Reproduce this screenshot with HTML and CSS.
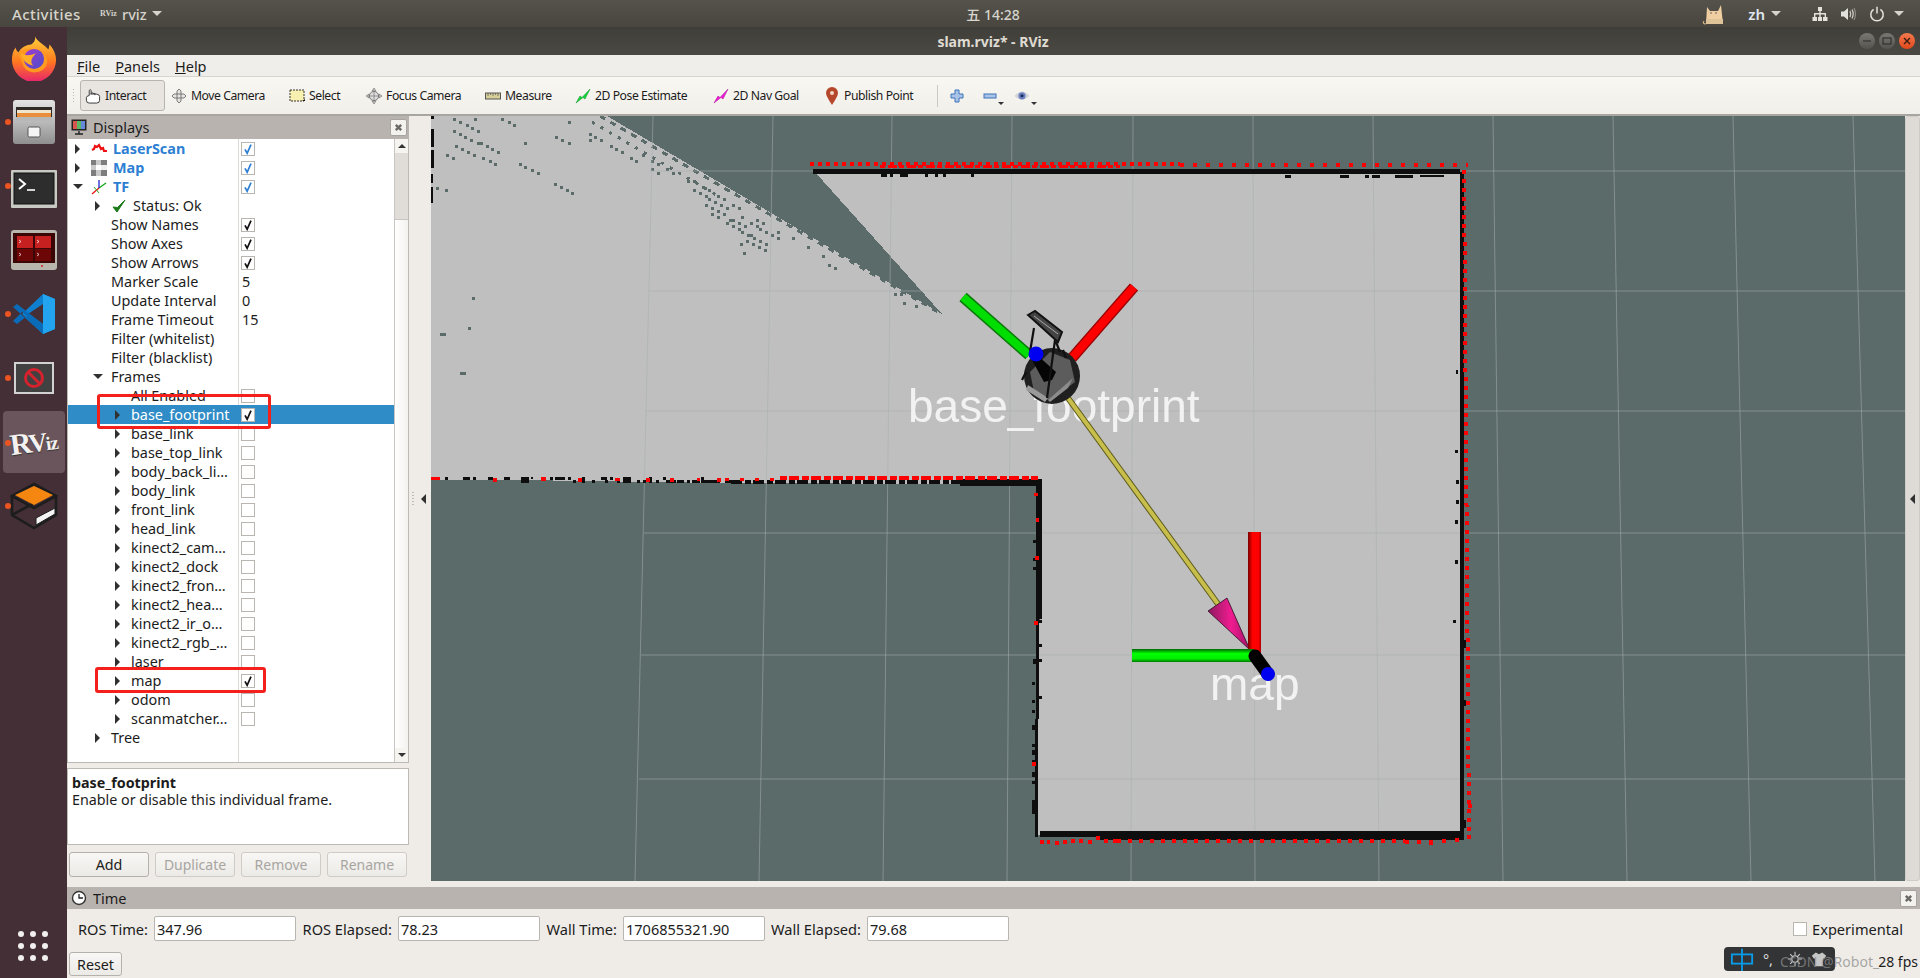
FILE: index.html
```html
<!DOCTYPE html>
<html lang="en">
<head>
<meta charset="utf-8">
<title>slam.rviz* - RViz</title>
<link rel="stylesheet" href="styles.css">
</head>
<body>
<svg class="sprite" aria-hidden="true"><defs>
<symbol id="check" viewBox="0 0 14 14"><path d="M3.500 7.500 L6 12 L10.500 2" fill="none" stroke="currentColor" stroke-width="2"/></symbol>
<symbol id="close" viewBox="0 0 10 10"><path d="M2 2 L8 8 M8 2 L2 8" fill="none" stroke="#6b6865" stroke-width="2.600"/></symbol>
<linearGradient id="metal" x1="0" y1="0" x2="0" y2="1"><stop offset="0" stop-color="#e4e4e4"/><stop offset="1" stop-color="#8f8f8f"/></linearGradient>
<linearGradient id="ffo" x1="0" y1="0" x2="0" y2="1"><stop offset="0" stop-color="#ffd23c"/><stop offset=".55" stop-color="#ff7a1e"/><stop offset="1" stop-color="#e8246c"/></linearGradient>
<linearGradient id="ffp" x1="0" y1="0" x2="1" y2="1"><stop offset="0" stop-color="#a23ad0"/><stop offset="1" stop-color="#4a4ec8"/></linearGradient>
<linearGradient id="shaftR" x1="0" y1="0" x2="1" y2="0"><stop offset="0" stop-color="#700"/><stop offset=".35" stop-color="#f00"/><stop offset=".8" stop-color="#f00"/><stop offset="1" stop-color="#a00"/></linearGradient>
<linearGradient id="shaftG" x1="0" y1="0" x2="0" y2="1"><stop offset="0" stop-color="#060"/><stop offset=".35" stop-color="#0f0"/><stop offset=".75" stop-color="#0e0"/><stop offset="1" stop-color="#070"/></linearGradient>
<linearGradient id="cone" x1="0" y1="0" x2="1" y2="0"><stop offset="0" stop-color="#8e1a60"/><stop offset=".55" stop-color="#f01c90"/><stop offset="1" stop-color="#a01468"/></linearGradient>
</defs></svg>

<div class="screen">
  <header class="topbar">
    <div class="top-left">
      <span class="activities">Activities</span>
      <span class="app-mini">RViz</span>
      <span class="app-name">rviz</span>
      <i class="caret"></i>
    </div>
    <div class="clock">五 14:28</div>
    <div class="top-right">
      <svg class="cat" viewBox="0 0 24 24"><path d="M5 5 L8 9 H16 L19 3 L21 22 H4 Z" fill="#efcfa2"/><path d="M4 22 Q0 22 2 19" fill="none" stroke="#d8b888" stroke-width="1.200"/><circle cx="9" cy="11" r=".8" fill="#555"/><circle cx="14" cy="11" r=".8" fill="#555"/><rect x="4" y="17" width="17" height="5" fill="#dfc398"/></svg>
      <span class="lang">zh</span><i class="caret"></i>
      <svg class="tray net" viewBox="0 0 16 16"><path d="M6 1 H10 V5 H8.700 V7 H14 V11 H15.500 V15 H11 V11 H12.600 V8.400 H8.700 V11 H10 V15 H6 V11 H7.300 V8.400 H3.400 V11 H5 V15 H.5 V11 H2 V7 H7.300 V5 H6 Z" fill="#e4e2dc"/></svg>
      <svg class="tray vol" viewBox="0 0 16 16"><path d="M1 5.500 H4 L8 2 V14 L4 10.500 H1 Z" fill="#e4e2dc"/><path d="M10 5 Q11.500 8 10 11 M12 3.500 Q14.400 8 12 12.500" fill="none" stroke="#cfccc6" stroke-width="1.300"/><path d="M14 2 Q17 8 14 14" fill="none" stroke="#8e8b85" stroke-width="1.200"/></svg>
      <svg class="tray pow" viewBox="0 0 16 16"><path d="M4.600 3.400 A6.200 6.200 0 1 0 11.400 3.400" fill="none" stroke="#e4e2dc" stroke-width="1.500"/><path d="M8 .8 V7.400" stroke="#e4e2dc" stroke-width="1.500"/></svg>
      <i class="caret"></i>
    </div>
  </header>

  <div class="desktop">
    <nav class="dock">
      <div class="launch">
        <svg class="ic-ff" viewBox="0 0 48 48"><path d="M25 1 C27 7 34 9 39 15 C40 13 40 11 40 10 C45 15 47 21 47 26 A23 23 0 0 1 1 26 C1 21 2 16 5 13 C5 15 6 17 8 18 C10 13 17 10 21 10 C24 8 26 5 25 1 Z" fill="url(#ffo)"/><path d="M8 20 Q14 12 24 15 Q36 15 38 27 Q37 38 24 39 Q14 38 12 30 Q10 25 8 20Z" fill="#ff9a20"/><circle cx="24" cy="25" r="10.500" fill="url(#ffp)"/><path d="M10 19 Q17 23 26 19 Q18 27 23 32 Q13 30 10 19Z" fill="#ffb028"/></svg>
      </div>
      <div class="launch run">
        <svg class="ic-files" viewBox="0 0 42 44"><rect x="0" y="0" width="42" height="44" rx="3" fill="url(#metal)"/><rect x="3" y="7" width="36" height="14" fill="#2f2a26"/><rect x="4" y="10" width="34" height="3" fill="#f0e4cc"/><rect x="4" y="13" width="34" height="4" fill="#e98e3c"/><rect x="3" y="17" width="36" height="4" fill="#b8b8b8"/><rect x="15" y="27" width="12" height="10" rx="1.500" fill="#f4f4f4" stroke="#555"/></svg>
      </div>
      <div class="launch run">
        <svg class="ic-term ic-shift" viewBox="0 0 46 38"><rect width="46" height="38" rx="1" fill="#c9c9c4"/><rect x="3" y="3" width="40" height="31" fill="#2d2d2d" stroke="#111"/><path d="M8 9 L14 14 L8 19" fill="none" stroke="#fff" stroke-width="2"/><path d="M16 20 H24" stroke="#fff" stroke-width="1.600"/></svg>
      </div>
      <div class="launch">
        <svg class="ic-term" viewBox="0 0 46 40"><rect width="46" height="40" rx="3" fill="#b9b6ad"/><rect x="2" y="3" width="42" height="30" fill="#3a0606"/><rect x="6" y="6" width="16" height="12" fill="#c62020"/><rect x="24" y="6" width="16" height="12" fill="#c62020"/><rect x="6" y="19" width="16" height="12" fill="#6d0606"/><rect x="24" y="19" width="16" height="12" fill="#6d0606"/><path d="M8 10 l2 1.500 l-2 1.500 M26 10 l2 1.500 l-2 1.500 M8 23 l2 1.500 l-2 1.500 M26 23 l2 1.500 l-2 1.500" stroke="#fff" fill="none" stroke-width=".7"/><circle cx="31" cy="36" r="1" fill="#d22"/></svg>
      </div>
      <div class="launch run">
        <svg class="ic-vs" viewBox="0 0 42 42"><path d="M30 1 L42 6 V36 L30 41 L9 21 Z" fill="#0f7fd0"/><path d="M30 1 L42 6 V36 L30 41 Z" fill="#23a4ee"/><path d="M30 11 L15 21 L30 31 Z" fill="#452f36"/><path d="M0 14 L4 11 L30 31 V41 Z M0 28 L4 31 L14 23 L9 19 Z" fill="#0a6cb8"/></svg>
      </div>
      <div class="launch run">
        <svg class="ic-no" viewBox="0 0 40 32"><rect width="40" height="32" fill="#d2d2d2"/><rect x="2" y="2" width="36" height="28" fill="#414141"/><circle cx="20" cy="16" r="8.500" fill="none" stroke="#d2232e" stroke-width="3"/><path d="M14 10 L26 22" stroke="#d2232e" stroke-width="3"/></svg>
      </div>
      <div class="launch run active">
        <span class="rviz-logo">R<span class="rviz-v">V</span><span class="rviz-iz">iz</span></span>
      </div>
      <div class="launch run">
        <svg class="ic-gz" viewBox="0 0 48 48"><path d="M24 2 L46 14 L24 26 L2 14 Z M2 14 V33 L24 46 L46 33 V14 M2 33 L24 21" fill="none" stroke="#1d1d1d" stroke-width="2.600"/><path d="M24 4 L43 13 L24 23 L5 13 Z" fill="#f5860f"/><path d="M26 36 L45 26 V32 L26 43 Z" fill="#f4f4f4" stroke="#1d1d1d"/></svg>
      </div>
      <div class="apps">
        <i></i><i></i><i></i><i></i><i></i><i></i><i></i><i></i><i></i>
      </div>
    </nav>

    <div class="window">
      <div class="titlebar">
        <span class="title">slam.rviz* - RViz</span>
        <div class="winbtns">
          <span class="wb"><svg viewBox="0 0 16 16"><path d="M4 8 H12" stroke="#333" stroke-width="1.200"/></svg></span>
          <span class="wb"><svg viewBox="0 0 16 16"><rect x="4" y="5" width="8" height="6" fill="none" stroke="#333" stroke-width="1.200"/></svg></span>
          <span class="wb wb-close"><svg viewBox="0 0 16 16"><path d="M5 5 L11 11 M11 5 L5 11" stroke="#3a1c10" stroke-width="1.400"/></svg></span>
        </div>
      </div>
      <div class="menubar"><span><u>F</u>ile</span><span><u>P</u>anels</span><span><u>H</u>elp</span></div>
      <div class="toolbar">
        <span class="grip"></span>
        <div class="tool current"><svg class="ti" viewBox="0 0 16 17"><path d="M4 8 V2.500 Q5 1 6 2.500 V7 V5.500 Q7 4.500 8 5.500 V7 V6 Q9 5 10 6 V7.500 V6.600 Q11 5.800 12 6.600 Q15 7 15 9 V13 Q15 16 12 16 H4 Q1 16 1 13 V10 Q1 8.500 4 8 Z" fill="#fff" stroke="#333" stroke-width="1"/></svg>Interact</div>
        <div class="tool"><svg class="ti" viewBox="0 0 16 16"><path d="M8 1 L10 3 V6 H13 L15 8 L13 10 H10 V13 L8 15 L6 13 V10 H3 L1 8 L3 6 H6 V3 Z M6 6 H10 V10 H6 Z" fill="#e8e6e2" stroke="#6d6d6d" stroke-width=".9"/></svg>Move Camera</div>
        <div class="tool"><svg class="ti" viewBox="0 0 16 16"><rect x="1" y="2" width="14" height="11" fill="#f8f0b0" stroke="#333" stroke-dasharray="2 1"/><path d="M13 13 H16 V11 Z" fill="#111"/></svg>Select</div>
        <div class="tool"><svg class="ti" viewBox="0 0 16 16"><circle cx="8" cy="8" r="4.600" fill="#ddd" stroke="#777"/><path d="M8 0 L10 3 H6 Z M8 16 L10 13 H6 Z M0 8 L3 6 V10 Z M16 8 L13 6 V10 Z M3 8 H13 M8 3 V13" fill="#ccc" stroke="#777" stroke-width=".7"/></svg>Focus Camera</div>
        <div class="tool"><svg class="ti ti-m" viewBox="0 0 16 8"><rect x=".5" y="1" width="15" height="6" fill="#d6cf9a" stroke="#555"/><path d="M3 1 V4 M5.500 1 V3 M8 1 V4 M10.500 1 V3 M13 1 V4" stroke="#555" stroke-width=".7"/></svg>Measure</div>
        <div class="tool"><svg class="ti" viewBox="0 0 16 16"><path d="M1 15 L5 8 L7 9.500 L15 1 L10 11 L8 9.500 Z" fill="#12d838" stroke="#0a8a24" stroke-width=".5"/></svg>2D Pose Estimate</div>
        <div class="tool"><svg class="ti" viewBox="0 0 16 16"><path d="M1 15 L5 8 L7 9.500 L15 1 L10 11 L8 9.500 Z" fill="#f41ad8" stroke="#a00e90" stroke-width=".5"/></svg>2D Nav Goal</div>
        <div class="tool"><svg class="ti ti-p" viewBox="0 0 12 18"><path d="M6 18 Q0 9 0 6 A6 6 0 0 1 12 6 Q12 9 6 18 Z" fill="#b5482a"/><circle cx="6" cy="6" r="2" fill="#f2d8c4"/></svg>Publish Point</div>
        <span class="tsep"></span>
        <svg class="tv tv-plus" viewBox="0 0 14 14"><path d="M5 1 H9 V5 H13 V9 H9 V13 H5 V9 H1 V5 H5 Z" fill="#a9c4e8" stroke="#3c72b8"/></svg>
        <span class="tv-wrap"><svg class="tv" viewBox="0 0 14 14"><rect x="1" y="5" width="12" height="4" fill="#a9c4e8" stroke="#3c72b8"/></svg><i class="mini"></i></span>
        <span class="tv-wrap tv-eye"><svg class="tv" viewBox="0 0 16 12"><path d="M.5 6 Q8 -3 15.500 6 Q8 13 .5 6Z" fill="#d4d4da"/><circle cx="8" cy="5.800" r="3.600" fill="#6a80c0"/><circle cx="8" cy="5.800" r="1.500" fill="#1c2a58"/></svg><i class="mini"></i></span>
      </div>

      <div class="workspace">
        <aside class="displays">
          <div class="dock-head"><svg class="dh-ic" viewBox="0 0 16 16"><rect x=".5" y=".5" width="15" height="11" fill="#222"/><rect x="2" y="2" width="4" height="8" fill="#d6564e"/><rect x="6" y="2" width="4" height="8" fill="#58b866"/><rect x="10" y="2" width="4" height="8" fill="#6688d8"/><path d="M4 15 H12 M8 12 V15" stroke="#222" stroke-width="1.400"/></svg><span>Displays</span><button class="x-btn"><svg viewBox="0 0 10 10"><use href="#close"/></svg></button></div>
          <div class="tree">
            <div class="rows">
              <div class="row l0"><span class="name"><i class="tri r"></i><svg class="ri" viewBox="0 0 16 16"><path d="M1 9 L3 8 L4 5 L6 6 L8 4 L10 8 L12 7 L13 10 H16" fill="none" stroke="#ee1111" stroke-width="2.200"/></svg><b>LaserScan</b></span><span class="val"><span class="cb blue"><svg><use href="#check"/></svg></span></span></div>
              <div class="row l0"><span class="name"><i class="tri r"></i><svg class="ri" viewBox="0 0 16 16"><path d="M0 0 H5 V5 H0 Z M10 0 H16 V5 H10Z M0 10 H5 V16 H0Z M10 10 H16 V16 H10Z" fill="#7d7d7d"/><path d="M5 0 H10 V5 H5 Z M0 5 H5 V10 H0Z M5 10 H10 V16 H5Z" fill="#c9c9c9"/><rect x="10" y="5" width="6" height="5" fill="#eee"/></svg><b>Map</b></span><span class="val"><span class="cb blue"><svg><use href="#check"/></svg></span></span></div>
              <div class="row l0"><span class="name"><i class="tri d"></i><svg class="ri" viewBox="0 0 16 16"><path d="M8 9 L1 15" stroke="#e11" stroke-width="1.300"/><path d="M8 9 L15 4" stroke="#1a1" stroke-width="1.300"/><path d="M8 9 V1" stroke="#22c" stroke-width="1.300"/><path d="M3 8 L8 14" stroke="#2a2" stroke-width="1"/></svg><b>TF</b></span><span class="val"><span class="cb blue"><svg><use href="#check"/></svg></span></span></div>
              <div class="row l1"><span class="name"><i class="tri r"></i><svg class="ok" viewBox="0 0 14 14"><path d="M1 8 L5 13 L13 1 L5.500 8.500 Z" fill="#1a7a1a" stroke="#1a7a1a"/></svg>Status: Ok</span><span class="val"></span></div>
              <div class="row l1"><span class="name"><i class="tri n"></i>Show Names</span><span class="val"><span class="cb"><svg><use href="#check"/></svg></span></span></div>
              <div class="row l1"><span class="name"><i class="tri n"></i>Show Axes</span><span class="val"><span class="cb"><svg><use href="#check"/></svg></span></span></div>
              <div class="row l1"><span class="name"><i class="tri n"></i>Show Arrows</span><span class="val"><span class="cb"><svg><use href="#check"/></svg></span></span></div>
              <div class="row l1"><span class="name"><i class="tri n"></i>Marker Scale</span><span class="val">5</span></div>
              <div class="row l1"><span class="name"><i class="tri n"></i>Update Interval</span><span class="val">0</span></div>
              <div class="row l1"><span class="name"><i class="tri n"></i>Frame Timeout</span><span class="val">15</span></div>
              <div class="row l1"><span class="name"><i class="tri n"></i>Filter (whitelist)</span><span class="val"></span></div>
              <div class="row l1"><span class="name"><i class="tri n"></i>Filter (blacklist)</span><span class="val"></span></div>
              <div class="row l1"><span class="name"><i class="tri d"></i>Frames</span><span class="val"></span></div>
              <div class="row l2"><span class="name"><i class="tri n"></i>All Enabled</span><span class="val"><span class="cb"></span></span></div>
              <div class="row l2 sel"><span class="name"><i class="tri r"></i>base_footprint</span><span class="val"><span class="cb"><svg><use href="#check"/></svg></span></span></div>
              <div class="row l2"><span class="name"><i class="tri r"></i>base_link</span><span class="val"><span class="cb"></span></span></div>
              <div class="row l2"><span class="name"><i class="tri r"></i>base_top_link</span><span class="val"><span class="cb"></span></span></div>
              <div class="row l2"><span class="name"><i class="tri r"></i>body_back_li…</span><span class="val"><span class="cb"></span></span></div>
              <div class="row l2"><span class="name"><i class="tri r"></i>body_link</span><span class="val"><span class="cb"></span></span></div>
              <div class="row l2"><span class="name"><i class="tri r"></i>front_link</span><span class="val"><span class="cb"></span></span></div>
              <div class="row l2"><span class="name"><i class="tri r"></i>head_link</span><span class="val"><span class="cb"></span></span></div>
              <div class="row l2"><span class="name"><i class="tri r"></i>kinect2_cam…</span><span class="val"><span class="cb"></span></span></div>
              <div class="row l2"><span class="name"><i class="tri r"></i>kinect2_dock</span><span class="val"><span class="cb"></span></span></div>
              <div class="row l2"><span class="name"><i class="tri r"></i>kinect2_fron…</span><span class="val"><span class="cb"></span></span></div>
              <div class="row l2"><span class="name"><i class="tri r"></i>kinect2_hea…</span><span class="val"><span class="cb"></span></span></div>
              <div class="row l2"><span class="name"><i class="tri r"></i>kinect2_ir_o…</span><span class="val"><span class="cb"></span></span></div>
              <div class="row l2"><span class="name"><i class="tri r"></i>kinect2_rgb_…</span><span class="val"><span class="cb"></span></span></div>
              <div class="row l2"><span class="name"><i class="tri r"></i>laser</span><span class="val"><span class="cb"></span></span></div>
              <div class="row l2"><span class="name"><i class="tri r"></i>map</span><span class="val"><span class="cb"><svg><use href="#check"/></svg></span></span></div>
              <div class="row l2"><span class="name"><i class="tri r"></i>odom</span><span class="val"><span class="cb"></span></span></div>
              <div class="row l2"><span class="name"><i class="tri r"></i>scanmatcher…</span><span class="val"><span class="cb"></span></span></div>
              <div class="row l1"><span class="name"><i class="tri r"></i>Tree</span><span class="val"></span></div>
              <span class="mark mark-a"></span>
              <span class="mark mark-b"></span>
            </div>
            <div class="vscroll"><span class="sb-btn"><i class="up"></i></span><span class="thumb"></span><span class="sb-track"></span><span class="sb-btn"><i class="dn"></i></span></div>
          </div>
          <div class="hsplit"></div>
          <div class="desc"><b>base_footprint</b><br>Enable or disable this individual frame.</div>
          <div class="actions"><button class="btn">Add</button><button class="btn off">Duplicate</button><button class="btn off">Remove</button><button class="btn off">Rename</button></div>
        </aside>
        <div class="sash"><span class="grip-v"></span><i class="tri l"></i></div>

        <svg class="view" viewBox="431 116 1474 765" preserveAspectRatio="none">
          <rect x="431" y="116" width="1474" height="765" fill="#5a6b69"/>
          <g shape-rendering="crispEdges">
            <polygon fill="#bfbfbf" points="431,116 607,116 942,314 815,172 1460,172 1463,835 1038,835 1038,620 1040,620 1040,486 960,484 720,483 520,480 431,480"/>
            <path fill="#5a6b69" d="M453 118h3v3h-3zM459 121h3v3h-3zM466 124h3v3h-3zM471 127h3v3h-3zM477 130h3v3h-3zM453 130h3v3h-3zM459 133h3v3h-3zM464 136h3v3h-3zM470 139h3v3h-3zM477 142h6v3h-6zM486 145h3v3h-3zM491 148h3v3h-3zM497 151h3v3h-3zM455 145h3v3h-3zM461 148h3v3h-3zM467 151h3v3h-3zM473 154h3v3h-3zM482 157h3v3h-3zM489 160h3v3h-3zM494 163h3v3h-3zM446 154h3v3h-3zM452 157h3v3h-3zM436 187h3v3h-3zM445 189h3v3h-3zM474 118h3v3h-3zM501 118h3v3h-3zM508 121h3v3h-3zM513 124h3v3h-3zM524 142h3v3h-3zM568 121h3v3h-3zM555 136h3v3h-3zM561 139h3v3h-3zM568 142h3v3h-3zM519 163h3v3h-3zM524 166h3v3h-3zM531 169h3v3h-3zM537 172h3v3h-3zM554 183h3v3h-3zM560 186h3v3h-3zM566 189h3v3h-3zM571 192h3v3h-3zM472 297h3v3h-3zM468 327h3v3h-3zM440 333h6v3h-6zM460 372h6v3h-6zM589 133h3v3h-3zM594 136h3v3h-3zM600 139h3v3h-3zM589 139h3v3h-3zM610 145h3v3h-3zM615 148h3v3h-3zM621 151h3v3h-3zM630 157h3v3h-3zM635 160h3v3h-3zM642 154h3v3h-3zM651 160h3v3h-3zM651 168h3v3h-3zM657 163h3v3h-3zM657 172h3v3h-3zM666 168h3v3h-3zM672 172h3v3h-3zM687 180h3v3h-3zM693 180h3v3h-3zM693 189h3v3h-3zM699 192h3v3h-3zM702 186h3v3h-3zM708 189h3v3h-3zM705 195h3v3h-3zM708 198h3v3h-3zM714 201h3v3h-3zM717 195h3v3h-3zM723 198h3v3h-3zM720 204h3v3h-3zM705 204h3v3h-3zM711 207h3v3h-3zM711 213h3v3h-3zM717 210h3v3h-3zM717 216h3v3h-3zM723 213h3v3h-3zM726 207h3v3h-3zM732 204h3v3h-3zM738 207h3v3h-3zM729 219h6v3h-6zM741 216h3v3h-3zM726 222h3v3h-3zM732 225h3v3h-3zM738 222h3v3h-3zM744 225h3v3h-3zM738 228h3v3h-3zM741 231h3v3h-3zM747 234h6v3h-6zM750 222h3v3h-3zM756 219h3v3h-3zM762 222h3v3h-3zM756 225h3v3h-3zM765 231h3v3h-3zM759 228h3v3h-3zM753 237h3v3h-3zM746 240h3v3h-3zM740 243h3v3h-3zM752 243h3v3h-3zM759 240h3v3h-3zM765 243h3v3h-3zM758 246h3v3h-3zM764 249h3v3h-3zM743 252h3v3h-3zM771 234h3v3h-3zM777 231h3v3h-3zM777 237h3v3h-3zM792 237h3v3h-3zM807 246h3v3h-3zM822 255h3v3h-3zM828 264h3v3h-3zM834 267h3v3h-3zM894 293h3v3h-3zM900 293h3v3h-3zM903 302h3v3h-3zM915 305h3v3h-3z"/>
            <path d="M600 116 L938 312" fill="none" stroke="#5a6b69" stroke-width="3" stroke-dasharray="6 6"/>
            <path d="M592 122 L720 197" fill="none" stroke="#5a6b69" stroke-width="3" stroke-dasharray="3 7"/>
          </g>
          <g class="grid">
            <path d="M653 116 L635 881 M773 116 L759 881 M892 116 L883 881 M1012 116 L1007 881 M1133 116 L1131 881 M1253 116 L1255 881 M1373 116 L1379 881 M1493 116 L1503 881 M1613 116 L1627 881 M1733 116 L1751 881 M1853 116 L1875 881"/>
            <path d="M650 171 H1905 M649 291 H1905 M646 411 H1905 M644 533 H1905 M641 655 H1905 M639 779 H1905"/>
          </g>
          <g shape-rendering="crispEdges">
            <path fill="#0e0e0e" d="M813 169h647v5H813zM1457 172h7v668h-4V172zM1040 831h420v6h-420zM1100 834h364v6h-364zM1036 479h6v140h-6zM1036 619h3v100h-3zM1035 719h3v118h-3zM960 479h76v7h-76z"/>
            <path fill="#0e0e0e" d="M1033 540h3v3h-3zM1033 558h3v3h-3zM1033 567h3v3h-3zM1039 620h3v3h-3zM1039 644h3v3h-3zM1033 659h3v5h-3zM1039 659h3v3h-3zM1032 682h3v3h-3zM1032 700h3v3h-3zM1039 696h3v3h-3zM1032 710h3v3h-3zM1032 725h3v5h-3zM1032 744h3v3h-3zM1032 750h3v5h-3zM1032 760h3v3h-3zM1032 772h3v5h-3zM1032 781h3v3h-3zM1032 800h3v14h-3zM1453 620h3v3h-3zM1456 370h2v4h-2zM1455 450h3v3h-3zM1456 480h3v4h-3zM1456 500h3v4h-3zM1455 520h3v4h-3zM1455 560h3v4h-3zM1464 640h2v8h-2zM1464 700h2v6h-2zM1464 820h2v8h-2zM881 174h6v3h-6zM890 174h3v3h-3zM900 174h8v3h-8zM925 174h3v3h-3zM935 174h3v3h-3zM943 174h3v3h-3zM971 174h3v3h-3zM1285 175h6v3h-6zM1340 175h9v3h-9zM1365 175h4v3h-4zM1372 175h8v3h-8zM1395 175h18v3h-18zM1420 175h24v2h-24z"/>
            <path fill="#0e0e0e" d="M431 116h3v3h-3zM431 129h3v18h-3zM431 150h3v18h-3zM431 174h2v9h-2zM431 187h2v16h-2zM431 477h5v3h-5zM445 477h3v3h-3zM463 477h7v3h-7zM473 477h3v3h-3zM488 477h5v3h-5zM504 477h6v3h-6zM521 477h8v6h-8zM531 477h2v2h-2zM550 477h3v3h-3zM555 477h10v3h-10zM568 477h3v3h-3zM573 480h3v3h-3zM582 477h3v6h-3zM592 480h3v3h-3zM601 477h6v3h-6zM605 480h3v3h-3zM610 477h3v3h-3zM617 480h3v3h-3zM623 477h8v6h-8zM637 480h3v3h-3zM643 480h3v3h-3zM649 477h3v6h-3zM656 480h3v3h-3zM663 477h3v3h-3zM666 480h10v3h-10zM677 480h7v3h-7zM687 480h3v3h-3zM692 480h8v3h-8zM701 477h3v3h-3zM701 480h19v3h-19zM725 480h6v3h-6z"/>
            <path d="M731 482 H960" stroke="#0e0e0e" stroke-width="4" stroke-dasharray="11 3 6 2"/>
            <path fill="#f00" d="M1040 840h4v4h-4zM1047 840h3v4h-3zM1055 841h4v4h-4zM1063 840h4v4h-4zM1071 839h4v4h-4zM1079 839h4v4h-4zM1088 840h4v4h-4zM1096 836h4v4h-4zM1104 839h4v4h-4zM1113 839h4v4h-4zM1405 840h4v4h-4zM1417 840h4v4h-4zM1429 840h4v5h-4zM1442 839h4v4h-4zM1455 838h4v4h-4zM1467 835h4v4h-4zM1468 804h4v4h-4zM1467 818h4v4h-4zM1034 493h4v3h-4zM1036 518h3v4h-3zM1035 556h4v4h-4zM1034 621h4v4h-4zM1032 762h4v4h-4zM431 477h9v3h-9zM493 478h4v4h-4zM541 477h5v4h-5zM578 478h4v4h-4zM615 478h5v3h-5zM646 478h4v4h-4zM670 478h4v4h-4zM697 478h3v3h-3zM717 478h4v4h-4z"/>
            <path d="M780 478 H1038" stroke="#f00" stroke-width="4" stroke-dasharray="7 2 10 3"/>
            <path d="M725 479 H780" stroke="#f00" stroke-width="3" stroke-dasharray="4 11"/>
            <path d="M1117 841 H1405" stroke="#f00" stroke-width="4" stroke-dasharray="4 7"/>
            <path d="M810 164 H1180" stroke="#f00" stroke-width="4" stroke-dasharray="4 4"/>
            <path d="M880 166 H1120" stroke="#f00" stroke-width="3" stroke-dasharray="5 3 9 2"/>
            <path d="M1180 165 H1468" stroke="#f00" stroke-width="4" stroke-dasharray="4 9"/>
            <path d="M1464 170 L1469 838" stroke="#f00" stroke-width="4" stroke-dasharray="4 5"/>
          </g>

          <g class="labels">
            <text x="908" y="422">base_footprint</text>
            <text x="1210" y="700">map</text>
          </g>

          <path d="M963 297 L1029 355" stroke="#0a7a0a" stroke-width="11"/>
          <path d="M963 297 L1029 355" stroke="#0d0" stroke-width="8"/>
          <path d="M1134 287 L1072 358" stroke="#900" stroke-width="11"/>
          <path d="M1134 287 L1072 358" stroke="#f00" stroke-width="8"/>
          <path d="M1068 398 L1218 604" stroke="#5c5a1a" stroke-width="6"/>
          <path d="M1068 398 L1218 604" stroke="#c8be4c" stroke-width="4"/>
          <circle cx="1052" cy="376" r="28" fill="#1f1f1f"/>
          <path d="M1030 372 L1050 352 L1070 360 L1075 382 L1050 401 L1034 392 Z" fill="#5c5c5c"/>
          <path d="M1036 354 L1056 372 L1052 380 L1044 382 L1032 360 Z" fill="#050505"/>
          <path d="M1048 400 L1073 378 L1068 388 L1050 402 Z" fill="#8c8c8c"/>
          <path d="M1028 385 L1048 398 L1045 402 L1026 390 Z" fill="#9a9a9a"/>
          <path d="M1034 328 L1030 352 M1055 340 L1047 398 M1056 342 L1060 352 M1063 350 L1066 358 M1022 380 L1026 372" stroke="#111" stroke-width="2.200"/>
          <path d="M1028 315 L1035 311 L1062 332 L1058 342 Z" fill="#444" stroke="#111" stroke-width="2"/>
          <path d="M1034 316 L1058 334" stroke="#aaa" stroke-width="1"/>
          <circle cx="1036" cy="354" r="7.500" fill="#0000f0"/>
          <polygon points="1227,598 1208,611 1250,650" fill="url(#cone)" stroke="#2a0a20" stroke-width=".8"/>
          <rect x="1248" y="532" width="13" height="122" fill="url(#shaftR)"/>
          <rect x="1132" y="649" width="122" height="13" fill="url(#shaftG)"/>
          <path d="M1255 656 L1268 674" stroke="#000" stroke-width="13" stroke-linecap="round"/>
          <circle cx="1268" cy="674" r="7" fill="#0000f0"/>
        </svg>
        <div class="rside"><i class="tri l"></i></div>
      </div>

      <div class="time-head"><svg class="dh-ic" viewBox="0 0 16 16"><circle cx="8" cy="8" r="6.500" fill="#fff" stroke="#333" stroke-width="1.400"/><path d="M8 4 V8 H12" fill="none" stroke="#222" stroke-width="1.300"/></svg><span>Time</span><button class="x-btn"><svg viewBox="0 0 10 10"><use href="#close"/></svg></button></div>
      <div class="time-row">
        <label>ROS Time:</label><span class="field">347.96</span>
        <label>ROS Elapsed:</label><span class="field">78.23</span>
        <label>Wall Time:</label><span class="field">1706855321.90</span>
        <label>Wall Elapsed:</label><span class="field">79.68</span>
        <span class="exp"><span class="cb"></span>Experimental</span>
      </div>
      <div class="status-row"><button class="btn reset">Reset</button><span class="fps">28 fps</span>
        <div class="ime"><svg viewBox="0 0 26 26"><rect x="2" y="8" width="22" height="10" fill="none" stroke="#0a9be8" stroke-width="2"/><path d="M13 2 V26" stroke="#0a9be8" stroke-width="2"/></svg><span class="ime-t">°,</span><svg class="ime-i" viewBox="0 0 20 20"><circle cx="10" cy="10" r="4" fill="none" stroke="#ccc" stroke-width="1.400"/><path d="M10 1 V5 M10 15 V19 M1 10 H5 M15 10 H19 M4 4 L7 7 M13 13 L16 16 M16 4 L13 7 M7 13 L4 16" stroke="#ccc" stroke-width="1.300"/></svg><svg class="ime-i" viewBox="0 0 20 20"><path d="M6 2 L10 4 L14 2 L19 6 L16 10 L15 9 V19 H5 V9 L4 10 L1 6 Z" fill="#c6c6c6"/></svg></div>
        <span class="watermark">CSDN @Robot_</span>
      </div>
    </div>
  </div>
</div>
</body>
</html>
```
FILE: styles.css
```css
* { box-sizing: border-box; }
html, body { margin: 0; padding: 0; height: 978px; overflow: hidden; }
body { font-family: "Noto Sans", "Open Sans", sans-serif; font-size: 14.3px; color: #1c1c1c; background: #45303a; }
.sprite { position: absolute; width: 0; height: 0; }
.screen { display: flex; flex-direction: column; height: 978px; width: 1920px; }

/* top bar */
.topbar { height: 27px; flex: none; display: grid; grid-template-columns: 1fr auto 1fr; align-items: center; background: linear-gradient(#55524b, #48463f); color: #d6d4cc; font-size: 14.5px; font-weight: 500; }
.top-left { display: flex; align-items: center; padding-left: 12px; }
.activities { width: 88px; font-size: 15px; letter-spacing: .4px; }
.app-mini { width: 22px; font-family: "Liberation Serif", serif; font-size: 8px; font-weight: 700; }
.app-name { width: 30px; }
.caret { display: block; width: 0; height: 0; border: 5px solid transparent; border-top: 5px solid #d6d4cc; border-bottom: 0; }
.clock { font-family: "Noto Sans", "Noto Sans CJK SC", sans-serif; font-size: 14px; margin-left: 66px; }
.top-right { display: flex; align-items: center; justify-content: flex-end; padding-right: 16px; }
.cat { width: 24px; height: 24px; margin-right: 22px; }
.lang { font-weight: 600; margin-right: 6px; color: #dfe6ee; font-size: 15px; }
.tray { width: 16px; height: 16px; }
.net { margin-left: 31px; }
.vol { margin-left: 12px; }
.pow { margin-left: 13px; margin-right: 9px; }

.desktop { flex: 1; display: flex; min-height: 0; }
.dock { width: 67px; flex: none; background: #452f36; display: flex; flex-direction: column; align-items: center; position: relative; }
.launch { width: 62px; height: 64px; display: flex; align-items: center; justify-content: center; position: relative; }
.launch.run::before { content: ""; position: absolute; left: 2px; top: 29px; width: 6px; height: 6px; border-radius: 50%; background: #e95420; }
.launch.active { background: #6a555c; border-radius: 4px; height: 62px; margin: 1px 0; }
.ic-ff { width: 46px; height: 46px; }
.ic-files { width: 42px; height: 44px; }
.ic-term { width: 46px; height: 40px; }
.ic-shift { margin-top: 6px; }
.ic-vs { width: 42px; height: 42px; }
.ic-no { width: 40px; height: 32px; }
.ic-gz { width: 48px; height: 48px; }
.rviz-logo { font-family: "Liberation Serif", serif; font-weight: 700; color: #f4f2f0; font-size: 30px; transform: rotate(-8deg); margin-left: 1px; letter-spacing: -3px; text-shadow: 0 1px 1px #333; }
.rviz-v { font-size: 26px; }
.rviz-iz { font-size: 19px; letter-spacing: -1px; margin-left: 1px; }
.apps { position: absolute; left: 18px; bottom: 17px; display: grid; grid-template-columns: repeat(3, 6px); gap: 6px; }
.apps i { width: 6px; height: 6px; border-radius: 50%; background: #f2f0ee; }
.dock .launch:first-child { margin-top: -1px; }

.window { flex: 1; min-width: 0; display: flex; flex-direction: column; background: #efece8; }
.titlebar { height: 28px; flex: none; position: relative; display: flex; align-items: center; justify-content: center; background: linear-gradient(#403e39, #4b4943); color: #dfdbd2; font-size: 14px; font-weight: 700; padding-right: 1px; }
.winbtns { position: absolute; right: 5px; top: 6px; display: flex; gap: 4px; }
.wb { width: 16px; height: 16px; border-radius: 50%; background: linear-gradient(#7a7872, #55534e); display: block; }
.wb svg { display: block; }
.wb-close { background: linear-gradient(#f47a4e, #e0481c); }
.menubar { height: 22px; flex: none; display: flex; align-items: center; padding-left: 10px; gap: 15px; background: #f0eeea; border-bottom: 1px solid #d8d4ce; font-size: 14.5px; }
.menubar u { text-decoration-thickness: 1px; }
.toolbar { height: 37px; flex: none; display: grid; grid-template-columns: 13px 85px 118px 77px 119px 90px 138px 113px 111px 19px 33px 31px 30px; align-items: center; justify-content: start; background: linear-gradient(#f9f7f2, #f1efea); font-size: 12.2px; letter-spacing: -.45px; }
.grip { width: 3px; height: 16px; margin-left: 5px; background: radial-gradient(circle, #bbb 35%, transparent 40%) 0 0 / 3px 3px; }
.tool { display: flex; align-items: center; gap: 4px; height: 31px; white-space: nowrap; padding-left: 6px; }
.tool.current { background: #e8e5e1; border: 1px solid #b8b4ae; border-radius: 3px; padding-left: 4px; }
.ti { width: 16px; height: 16px; flex: none; }
.ti-m { height: 8px; }
.ti-p { width: 12px; height: 18px; margin-right: 2px; }
.tsep { display: block; width: 1px; height: 22px; margin-left: 6px; background: #ccc9c4; }
.tv { width: 14px; height: 14px; display: block; }
.tv-wrap { position: relative; display: block; }
.tv-eye .tv { width: 16px; }
.mini { position: absolute; left: 15px; top: 13px; width: 0; height: 0; border: 3px solid transparent; border-top: 3px solid #333; border-bottom: 0; }
.tv-eye .mini { left: 17px; }

.workspace { flex: none; height: 767px; display: flex; border-top: 2px solid #a9a6a2; }
.displays { width: 342px; flex: none; display: flex; flex-direction: column; }
.dock-head { height: 23px; flex: none; display: flex; align-items: center; background: #b8b3af; padding: 0 2px 1px 4px; font-size: 14.5px; }
.dh-ic { width: 16px; height: 16px; margin-right: 6px; flex: none; }
.x-btn { margin-left: auto; width: 17px; height: 17px; padding: 3px; background: #f4f2ef; border: 1px solid #a8a4a0; border-radius: 2px; display: block; }
.x-btn svg { display: block; width: 9px; height: 9px; }
.tree { height: 624px; flex: none; display: flex; background: #fff; border: 1px solid #bdb9b4; border-top: 0; }
.rows { flex: 1; position: relative; min-width: 0; background: linear-gradient(#ddd9d4, #ddd9d4) 170px 0 / 1px 100% no-repeat #fff; }
.row { height: 19px; display: grid; grid-template-columns: 170px 1fr; align-items: center; white-space: nowrap; font-size: 14.4px; }
.name { display: flex; align-items: center; }
.name b { font-weight: 700; color: #2d7fd3; }
.l0 .name { padding-left: 7px; }
.l1 .name { padding-left: 27px; }
.l2 .name { padding-left: 47px; }
.tri { display: block; width: 0; height: 0; flex: none; border-style: solid; border-color: transparent; }
.tri.r { border-width: 5px 0 5px 5px; border-left-color: #303030; margin-right: 11px; }
.tri.d { border-width: 5px 5px 0 5px; border-top-color: #303030; margin-left: -2px; margin-right: 8px; }
.tri.n { width: 16px; border-width: 0; }
.tri.l { border-width: 5px 5px 5px 0; border-right-color: #303030; }
.ri { width: 16px; height: 16px; margin-right: 6px; flex: none; }
.ok { width: 14px; height: 14px; margin: 0 7px 0 1px; flex: none; }
.val { padding-left: 4px; display: flex; align-items: center; }
.cb { display: block; width: 14px; height: 14px; margin-left: -1px; background: #fff; border: 1px solid #b9b6b2; color: #111; }
.cb svg { display: block; width: 12px; height: 12px; }
.cb.blue { color: #2d7fd3; }
.sel { background: #308cc6; }
.sel .name { color: #fff; }
.mark { position: absolute; border: 3px solid #f3201c; border-radius: 3px; pointer-events: none; }
.mark-a { left: 29px; top: 255px; width: 174px; height: 35px; }
.mark-b { left: 27px; top: 528px; width: 171px; height: 26px; }
.vscroll { width: 14px; flex: none; display: flex; flex-direction: column; background: #f6f4f1; border-left: 1px solid #c9c5c0; }
.sb-btn { height: 14px; flex: none; display: flex; align-items: center; justify-content: center; background: #f6f4f1; }
.sb-btn .up, .sb-btn .dn { display: block; width: 0; height: 0; border: 4px solid transparent; }
.sb-btn .up { border-bottom: 4px solid #333; border-top: 0; }
.sb-btn .dn { border-top: 4px solid #333; border-bottom: 0; }
.thumb { height: 67px; flex: none; background: #e0dcd8; border-bottom: 1px solid #c9c5c0; }
.sb-track { flex: 1; background: linear-gradient(90deg, #fff, #f4f2ef); }
.hsplit { height: 5px; flex: none; }
.desc { height: 77px; flex: none; background: #fff; border: 1px solid #bdb9b4; padding: 5px 4px; line-height: 17px; font-size: 14.3px; margin-bottom: 7px; }
.actions { display: flex; gap: 6px; padding-left: 2px; }
.btn { width: 80px; height: 25px; font: inherit; font-size: 14.300px; color: #1c1c1c; background: linear-gradient(#f8f7f5, #eceae6); border: 1px solid #b5b1ac; border-radius: 3px; padding: 0; }
.btn.off { color: #a8a5a1; font-size: 14px; border-color: #cfcbc6; }
.sash { width: 22px; flex: none; display: flex; align-items: center; gap: 7px; padding: 0 0 0 3px; }
.grip-v { display: block; width: 2px; height: 16px; background: radial-gradient(circle, #bbb 40%, transparent 45%) 0 0 / 2px 3px; }
.view { width: 1474px; height: 765px; flex: none; display: block; }
.grid path { fill: none; stroke: #a8afae; stroke-opacity: .55; stroke-width: 1; }
.labels text { font-family: "Liberation Sans", Arial, sans-serif; font-size: 46px; fill: #f6f6f6; fill-opacity: .92; filter: blur(.4px); }
.rside { flex: 1; display: flex; align-items: center; justify-content: center; background: #dedad6; border: 1px solid #cfcbc6; border-radius: 3px; }
.time-head { height: 22px; margin-top: 6px; flex: none; display: flex; align-items: center; background: #b8b3af; padding: 0 3px 0 4px; font-size: 14.5px; }
.time-row { height: 37px; flex: none; display: grid; grid-template-columns: 87px 142px 102px 142px 83px 142px 102px 142px 1fr; align-items: center; padding-top: 2px; font-size: 14.6px; }
.time-row label { justify-self: end; padding-right: 6px; }
.field { height: 25px; display: flex; align-items: center; padding-left: 2px; background: #fff; border: 1px solid #b9b5b0; border-radius: 2px; font-size: 14.5px; }
.exp { justify-self: end; display: flex; align-items: center; gap: 5px; padding-right: 17px; }
.exp .cb { margin: 0; }
.status-row { flex: 1; position: relative; display: flex; align-items: flex-start; padding: 6px 0 0 2px; }
.reset { width: 53px; height: 24px; }
.fps { position: absolute; right: 2px; top: 6px; font-size: 14px; }
.ime { position: absolute; left: 1657px; top: 1px; width: 111px; height: 24px; background: #333436; border-radius: 4px; display: flex; align-items: center; padding-left: 5px; color: #ddd; }
.ime > svg:first-child { width: 26px; height: 24px; }
.ime-t { margin-left: 8px; width: 24px; }
.ime-i { width: 16px; height: 16px; margin-right: 8px; }
.watermark { position: absolute; left: 1713px; top: 6px; font-size: 14px; color: rgba(140, 140, 140, .75); }
```
